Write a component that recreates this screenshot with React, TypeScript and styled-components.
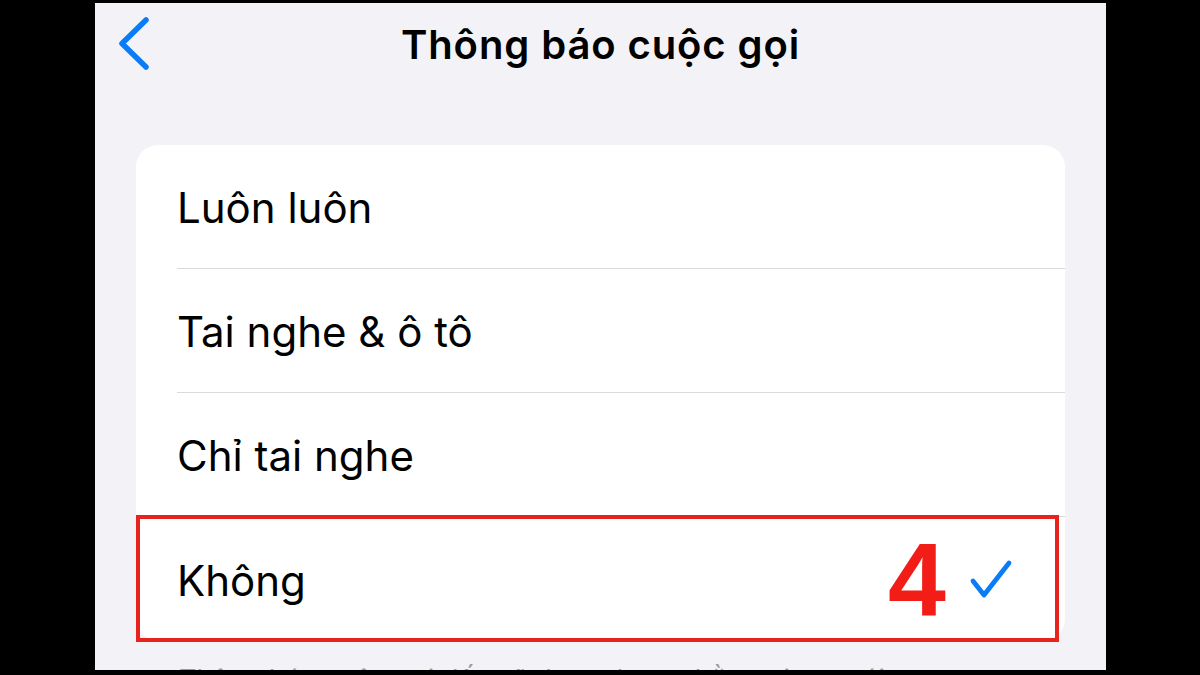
import styled, { createGlobalStyle } from 'styled-components'

const GlobalStyle = createGlobalStyle`
    html, body {
        margin: 0;
        padding: 0;
        background: #000;
    }
    body {
        font-family: Inter, "Noto Sans", "Liberation Sans", sans-serif;
        -webkit-font-smoothing: antialiased;
    }
`

const Page = styled.div`
    display: flex;
    justify-content: center;
    width: 1200px;
    height: 675px;
    overflow: hidden;
    background: #000;
`

const Screen = styled.div`
    width: 1011px;
    height: 667px;
    margin-top: 3px;
    margin-left: 1px;
    background: #f2f2f7;
    overflow: hidden;
    display: flex;
    flex-direction: column;

    & > * {
        flex-shrink: 0;
    }
`

const NavBar = styled.div`
    height: 80px;
    display: grid;
    grid-template-columns: 120px 1fr 120px;
    align-items: center;
    padding-top: 1px;
`

const BackButton = styled.div`
    padding-left: 22px;
    display: flex;
    align-items: center;
`

const Title = styled.h1`
    margin: 0;
    text-align: center;
    font-size: 40px;
    font-weight: 600;
    color: #000;
    letter-spacing: 0.9px;
`

const Group = styled.div`
    margin: 61px 41px 0;
    background: #fff;
    border-radius: 22px;
`

const Row = styled.div`
    position: relative;
    height: 124px;
    padding-left: 41px;
    display: flex;
`

const RowInner = styled.div<{ $last?: boolean }>`
    flex: 1;
    display: flex;
    align-items: center;
    justify-content: space-between;
    padding-right: 52px;
    border-bottom: ${p => (p.$last ? 'none' : '1px solid #d9d9de')};
`

const Label = styled.span`
    font-size: 42px;
    font-weight: 400;
    color: #000;
    padding-top: 2px;
`

const Highlight = styled.div`
    position: absolute;
    left: 0;
    top: -2px;
    right: 6px;
    bottom: -1px;
    border: 4px solid #e8221c;
    pointer-events: none;
`

const StepNumber = styled.span`
    position: absolute;
    left: 748px;
    top: 9px;
    font-family: "Liberation Sans", Arial, sans-serif;
    font-size: 104px;
    font-weight: 700;
    line-height: 1;
    color: #f21d17;
`

const Footer = styled.p`
    margin: 22px 0 0 84px;
    font-size: 27px;
    color: #9a9a9e;
`

const options = ['Luôn luôn', 'Tai nghe & ô tô', 'Chỉ tai nghe', 'Không']
const selected = 'Không'

function Chevron() {
    return (
        <svg width="34" height="54" viewBox="0 0 34 54">
            <polyline
                points="29,3 5,26.5 29,50"
                fill="none"
                stroke="#0a7cf5"
                strokeWidth="5.5"
                strokeLinecap="round"
                strokeLinejoin="round"
            />
        </svg>
    )
}

function Check() {
    return (
        <svg width="44" height="42" viewBox="0 0 44 42">
            <polyline
                points="4,23 15,37 40,5"
                fill="none"
                stroke="#0a7cf5"
                strokeWidth="4.8"
                strokeLinecap="round"
                strokeLinejoin="round"
            />
        </svg>
    )
}

export default function App() {
    return (
        <Page>
            <GlobalStyle />
            <Screen>
                <NavBar>
                    <BackButton>
                        <Chevron />
                    </BackButton>
                    <Title>Thông báo cuộc gọi</Title>
                    <div />
                </NavBar>

                <Group>
                    {options.map((opt, i) => (
                        <Row key={opt}>
                            <RowInner $last={i === options.length - 1}>
                                <Label>{opt}</Label>
                                {opt === selected && <Check />}
                            </RowInner>
                            {opt === selected && (
                                <Highlight>
                                    <StepNumber>4</StepNumber>
                                </Highlight>
                            )}
                        </Row>
                    ))}
                </Group>

                <Footer>Thông báo cuộc gọi đến sẽ được đọc to bằng giọng nói.</Footer>
            </Screen>
        </Page>
    )
}
